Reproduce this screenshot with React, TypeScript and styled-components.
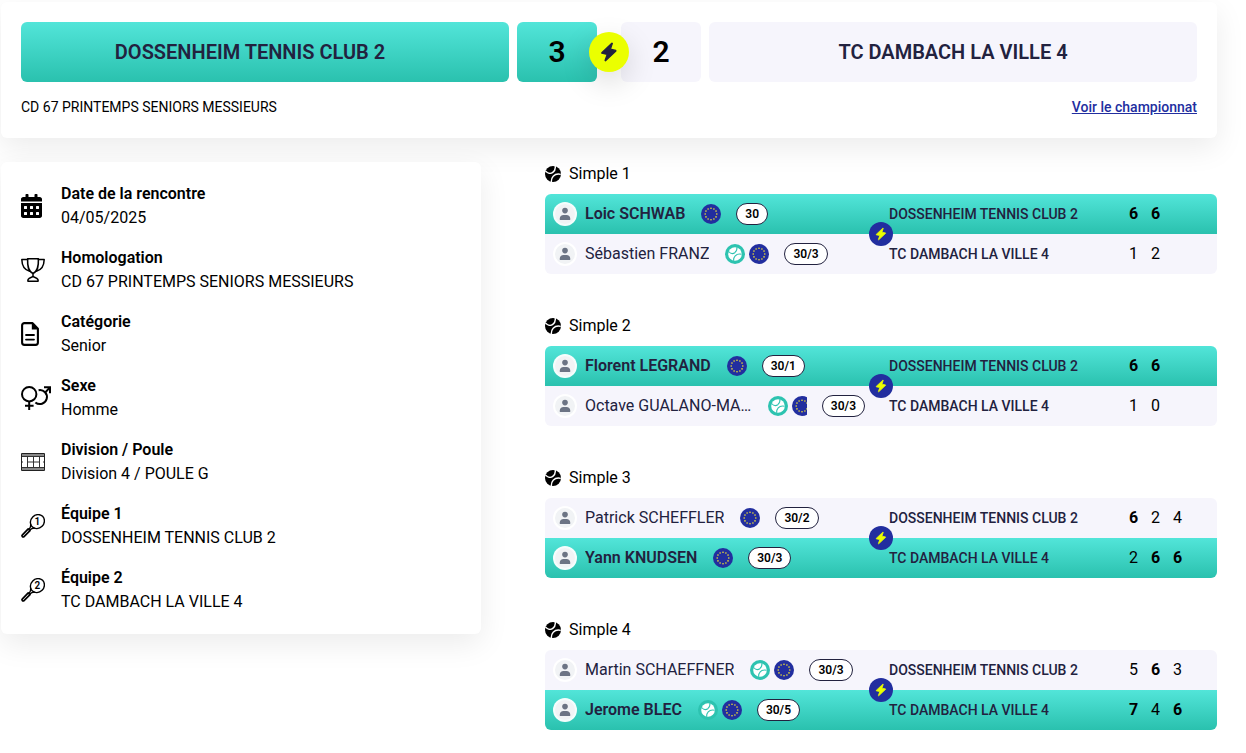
import React from "react";
import styled, { createGlobalStyle, css } from "styled-components";
import { FaCalendarAlt } from "react-icons/fa";

const GlobalStyle = createGlobalStyle`
  *, *::before, *::after { box-sizing: border-box; }
  body {
    margin: 0;
    background: #fff;
    color: #000;
    font-family: Roboto, "Liberation Sans", sans-serif;
    font-size: 16px;
    line-height: 24px;
  }
  h2, h3, p, dl, dt, dd, ul, ol { margin: 0; padding: 0; }
  ul, ol { list-style: none; }
  svg { display: block; }
`;

const teal = "linear-gradient(180deg, #52e5d9 0%, #2ac1ae 100%)";
const pale = "#f6f5fc";
const ink = "#22223f";
const navy = "#222e9f";
const lime = "#ebff00";

const surface = css<{ $win: boolean }>`
  background: ${(p) => (p.$win ? teal : pale)};
`;

const Page = styled.main`
  display: grid;
  gap: 24px;
  padding: 2px 29px 20px 1px;
`;

const Card = styled.section`
  padding: 20px;
  border-radius: 6px;
  background: #fff;
  box-shadow: 0 10px 30px rgba(0, 0, 0, 0.08);
`;

const Scoreboard = styled.div`
  display: grid;
  grid-template-columns: 1fr auto 1fr;
  gap: 8px;
`;

const TeamBanner = styled.h2<{ $win: boolean }>`
  ${surface}
  display: flex;
  align-items: center;
  justify-content: center;
  height: 60px;
  padding-right: ${(p) => (p.$win ? 30 : 0)}px;
  border-radius: 6px;
  color: ${ink};
  font-size: 20px;
  font-weight: 600;
`;

const ScorePair = styled.div`
  position: relative;
  display: flex;
  gap: 24px;
`;

const TeamScore = styled.strong<{ $win: boolean }>`
  ${surface}
  display: flex;
  align-items: center;
  justify-content: center;
  width: 80px;
  height: 60px;
  border-radius: 6px;
  font-size: 30px;
  font-weight: 600;
`;

const Versus = styled.span<{ $size: number; $accent?: boolean }>`
  position: absolute;
  top: 50%;
  left: 50%;
  transform: translate(-50%, -50%);
  display: flex;
  align-items: center;
  justify-content: center;
  width: ${(p) => p.$size}px;
  height: ${(p) => p.$size}px;
  border-radius: 50%;
  background: ${(p) => (p.$accent ? lime : navy)};
  color: ${(p) => (p.$accent ? ink : lime)};
  box-shadow: ${(p) => (p.$accent ? "0 10px 30px rgba(0, 0, 0, 0.15)" : "none")};
`;

const CardFooter = styled.div`
  display: flex;
  justify-content: space-between;
  margin-top: 14px;
  font-size: 14px;
  line-height: 22px;
`;

const ChampionshipLink = styled.a`
  color: ${navy};
  font-weight: 500;
  text-decoration: underline;
`;

const Columns = styled.div`
  display: grid;
  grid-template-columns: 5fr 7fr;
  gap: 64px;
  align-items: start;
`;

const Details = styled.dl`
  display: grid;
  gap: 16px;
`;

const Detail = styled.div`
  display: grid;
  grid-template-columns: 24px 1fr;
  column-gap: 16px;
`;

const DetailIcon = styled.span`
  grid-row: 1 / 3;
  align-self: center;
`;

const Term = styled.dt`
  font-weight: 600;
`;

const Value = styled.dd`
  grid-column: 2;
`;

const Matches = styled.div`
  display: grid;
  gap: 40px;
  min-width: 0;
`;

const MatchTitle = styled.h3`
  display: flex;
  align-items: center;
  gap: 8px;
  margin-bottom: 8px;
  font-size: 16px;
  font-weight: 400;
`;

const MatchBox = styled.ul`
  position: relative;
`;

const PlayerRow = styled.li<{ $win: boolean }>`
  ${surface}
  display: grid;
  grid-template-columns: 7fr 5fr 2fr;
  align-items: center;
  height: 40px;
  color: ${ink};
  &:nth-child(1) { border-radius: 6px 6px 0 0; }
  &:nth-child(2) { border-radius: 0 0 6px 6px; }
`;

const Player = styled.div`
  display: flex;
  align-items: center;
  min-width: 0;
  padding: 0 16px 0 8px;
`;

const Avatar = styled.span`
  flex: none;
  margin-right: 8px;
`;

const Identity = styled.div`
  display: flex;
  align-items: center;
  gap: 16px;
  min-width: 0;
  overflow: hidden;
`;

const Name = styled.span<{ $win: boolean }>`
  flex: none;
  max-width: 167px;
  overflow: hidden;
  text-overflow: ellipsis;
  white-space: nowrap;
  font-weight: ${(p) => (p.$win ? 600 : 400)};
`;

const Badges = styled.span`
  display: flex;
  flex: none;
  gap: 4px;
`;

const Rank = styled.span`
  flex: none;
  margin-left: 15px;
  padding: 0 8px;
  border: 1px solid ${ink};
  border-radius: 11px;
  background: #fff;
  color: #000;
  font-size: 12px;
  font-weight: 600;
  line-height: 20px;
`;

const Club = styled.span`
  padding-left: 8px;
  font-size: 14px;
  font-weight: 500;
  white-space: nowrap;
`;

const Sets = styled.ol`
  display: flex;
  gap: 12px;
  padding-left: 8px;
  color: #000;
`;

const SetScore = styled.li<{ $won: boolean }>`
  width: 10px;
  font-weight: ${(p) => (p.$won ? 700 : 400)};
`;

const Bolt = ({ size }: { size: number }) => (
  <svg width={size} height={size} viewBox="0 0 24 24" aria-hidden="true">
    <path
      d="M14.8 3.2 4.8 12.6 4.8 13.2 10.2 14.4 8 20.4 8.5 20.8 18.9 11 18.8 10.4 13.4 9.2 15.4 3.4Z"
      fill="currentColor"
      stroke="currentColor"
      strokeWidth="1.2"
      strokeLinejoin="round"
    />
  </svg>
);

const BallIcon = () => (
  <svg width="16" height="16" viewBox="0 0 16 16" aria-hidden="true">
    <circle cx="8" cy="8" r="8" fill="#000" />
    <g fill="none" stroke="#fff" strokeWidth="1.4">
      <path d="M0.4 5C2.6 7.4 5.8 8 7.8 6.4C9.8 4.8 10.6 2.4 10.2 0" />
      <path d="M15.8 8.4C12.8 7.6 10 8.4 8.2 10.2C6.8 11.8 6.2 13.8 6.4 16" />
    </g>
  </svg>
);

const BallBadge = () => (
  <svg width="20" height="20" viewBox="0 0 20 20" aria-hidden="true">
    <circle cx="10" cy="10" r="10" fill="#2dc3b0" />
    <circle cx="10" cy="10" r="6.8" fill="#fff" />
    <g fill="none" stroke="#2dc3b0" strokeWidth="1.1">
      <path d="M3.6 7.5C5.4 9.5 8.1 10 9.8 8.7C11.5 7.3 12.2 5.3 11.9 3.2" />
      <path d="M16.6 10.3C14.1 9.7 11.7 10.3 10.2 11.9C9 13.2 8.5 14.9 8.6 16.8" />
    </g>
  </svg>
);

const stars = Array.from({ length: 12 }, (_, i) => {
  const a = (i * Math.PI) / 6;
  return { x: 10 + 5.8 * Math.sin(a), y: 10 - 5.8 * Math.cos(a) };
});

const EuropeBadge = () => (
  <svg width="20" height="20" viewBox="0 0 20 20" aria-hidden="true">
    <circle cx="10" cy="10" r="10" fill={navy} />
    {stars.map((s, i) => (
      <circle key={i} cx={s.x} cy={s.y} r="0.8" fill="#f5e430" />
    ))}
  </svg>
);

const AvatarIcon = () => (
  <svg width="24" height="24" viewBox="0 0 24 24" aria-hidden="true">
    <circle cx="12" cy="12" r="12" fill="#fff" fillOpacity="0.95" />
    <circle cx="12" cy="12" r="10" fill="#f1f3f5" />
    <circle cx="12" cy="8.6" r="2.8" fill="#6c7484" />
    <path d="M6.8 18v-1.6c0-2 1.6-3.4 3.6-3.4h3.2c2 0 3.6 1.4 3.6 3.4V18Z" fill="#6c7484" />
  </svg>
);

const TrophyIcon = () => (
  <svg width="24" height="24" viewBox="0 0 24 24" fill="none" stroke="#000" strokeWidth="1.5" strokeLinejoin="round" strokeLinecap="round" aria-hidden="true">
    <path d="M6.6 0.8H17.4C17.6 8 17 13.4 12 15.4C7 13.4 6.4 8 6.6 0.8Z" />
    <path d="M6.6 1.6H0.8C1 8.4 3 12 8.6 13.2" />
    <path d="M17.4 1.6H23.2C23 8.4 21 12 15.4 13.2" />
    <path d="M12 15.4V18.2C11 19.8 8.4 19.2 7.2 21.4C6.8 22.2 6.8 23.2 7 23.2H17C17.2 23.2 17.2 22.2 16.8 21.4C15.6 19.2 13 19.8 12 18.2" />
  </svg>
);

const DocumentIcon = () => (
  <svg width="18" height="24" viewBox="0 0 18 24" aria-hidden="true">
    <path d="M3.4 1.1H11.6L16.9 6.8V20.6a2.3 2.3 0 0 1-2.3 2.3H3.4a2.3 2.3 0 0 1-2.3-2.3V3.4a2.3 2.3 0 0 1 2.3-2.3Z" fill="none" stroke="#000" strokeWidth="2.1" strokeLinejoin="round" />
    <path d="M10.8 1.2V7.4H16.8L11.8 1.2Z" fill="#000" />
    <path d="M5 13H13M5 17.6H13" stroke="#000" strokeWidth="1.8" strokeLinecap="round" />
  </svg>
);

const GenderIcon = () => (
  <svg width="30" height="24" viewBox="0 0 30 24" fill="none" stroke="#000" strokeWidth="2" aria-hidden="true">
    <circle cx="8.2" cy="8.2" r="7.2" />
    <path d="M8.2 15.4V24M4 19.8H12.6" />
    <path d="M17.6 4.2A7 7 0 1 1 14.4 16.4" />
    <path d="M24.4 6.2L28.8 1.6M23 1.2H29V7.2" />
  </svg>
);

const CourtIcon = () => (
  <svg width="24" height="18" viewBox="0 0 24 18" fill="none" stroke="#222" aria-hidden="true">
    <path d="M0 2H24M0 16H24" stroke="#888" strokeWidth="2" />
    <path d="M0 3.5H24M0 14.5H24M6.5 3.5V14.5M12.5 3.5V14.5M18.5 3.5V14.5M6.5 9H18.5M0.5 9H2M22 9H23.5" stroke="#333" strokeWidth="1" />
    <path d="M0.5 0.5H23.5V17.5H0.5Z" strokeWidth="1" />
  </svg>
);

const RacketIcon = ({ label }: { label: string }) => (
  <svg width="24" height="24" viewBox="0 0 24 24" fill="none" stroke="#000" strokeWidth="1.4" strokeLinejoin="round" aria-hidden="true">
    <ellipse cx="16.4" cy="7.6" rx="7.4" ry="6.6" transform="rotate(-45 16.4 7.6)" />
    <path d="M9.8 10C10 12.6 9.2 14 8 15.2M14 14.2C11.4 14 10 14.8 8.8 16" />
    <path d="M7.2 14.9L9 16.7L2.8 22.8C2 23.6 0.4 22 1.2 21.2Z" strokeWidth="1.7" />
    <text x="16.4" y="11.2" textAnchor="middle" fontFamily="Roboto, sans-serif" fontSize="10" fontWeight="600" fill="#000" stroke="none">
      {label}
    </text>
  </svg>
);

const CalendarIcon = styled(FaCalendarAlt)`
  width: 21px;
  height: 24px;
`;

const home = "DOSSENHEIM TENNIS CLUB 2";
const away = "TC DAMBACH LA VILLE 4";

const details = [
  { term: "Date de la rencontre", value: "04/05/2025", icon: <CalendarIcon /> },
  { term: "Homologation", value: "CD 67 PRINTEMPS SENIORS MESSIEURS", icon: <TrophyIcon /> },
  { term: "Catégorie", value: "Senior", icon: <DocumentIcon /> },
  { term: "Sexe", value: "Homme", icon: <GenderIcon /> },
  { term: "Division / Poule", value: "Division 4 / POULE G", icon: <CourtIcon /> },
  { term: "Équipe 1", value: home, icon: <RacketIcon label="1" /> },
  { term: "Équipe 2", value: away, icon: <RacketIcon label="2" /> },
];

type Side = { name: string; rank: string; licensed?: boolean; sets: number[] };

const matches: { title: string; winner: number; sides: [Side, Side] }[] = [
  {
    title: "Simple 1",
    winner: 0,
    sides: [
      { name: "Loic SCHWAB", rank: "30", sets: [6, 6] },
      { name: "Sébastien FRANZ", rank: "30/3", licensed: true, sets: [1, 2] },
    ],
  },
  {
    title: "Simple 2",
    winner: 0,
    sides: [
      { name: "Florent LEGRAND", rank: "30/1", sets: [6, 6] },
      { name: "Octave GUALANO-MA...", rank: "30/3", licensed: true, sets: [1, 0] },
    ],
  },
  {
    title: "Simple 3",
    winner: 1,
    sides: [
      { name: "Patrick SCHEFFLER", rank: "30/2", sets: [6, 2, 4] },
      { name: "Yann KNUDSEN", rank: "30/3", sets: [2, 6, 6] },
    ],
  },
  {
    title: "Simple 4",
    winner: 1,
    sides: [
      { name: "Martin SCHAEFFNER", rank: "30/3", licensed: true, sets: [5, 6, 3] },
      { name: "Jerome BLEC", rank: "30/5", licensed: true, sets: [7, 4, 6] },
    ],
  },
];

export default function App() {
  return (
    <>
      <GlobalStyle />
      <Page>
        <Card>
          <Scoreboard>
            <TeamBanner $win>{home}</TeamBanner>
            <ScorePair>
              <TeamScore $win>3</TeamScore>
              <TeamScore $win={false}>2</TeamScore>
              <Versus $size={40} $accent>
                <Bolt size={24} />
              </Versus>
            </ScorePair>
            <TeamBanner $win={false}>{away}</TeamBanner>
          </Scoreboard>
          <CardFooter>
            <p>CD 67 PRINTEMPS SENIORS MESSIEURS</p>
            <ChampionshipLink href="#championnat">Voir le championnat</ChampionshipLink>
          </CardFooter>
        </Card>
        <Columns>
          <Card>
            <Details>
              {details.map((d) => (
                <Detail key={d.term}>
                  <DetailIcon>{d.icon}</DetailIcon>
                  <Term>{d.term}</Term>
                  <Value>{d.value}</Value>
                </Detail>
              ))}
            </Details>
          </Card>
          <Matches>
            {matches.map((m) => (
              <section key={m.title}>
                <MatchTitle>
                  <BallIcon />
                  {m.title}
                </MatchTitle>
                <MatchBox>
                  {m.sides.map((side, i) => {
                    const win = i === m.winner;
                    const other = m.sides[1 - i];
                    return (
                      <PlayerRow key={side.name} $win={win}>
                        <Player>
                          <Avatar>
                            <AvatarIcon />
                          </Avatar>
                          <Identity>
                            <Name $win={win}>{side.name}</Name>
                            <Badges>
                              {side.licensed && <BallBadge />}
                              <EuropeBadge />
                            </Badges>
                          </Identity>
                          <Rank>{side.rank}</Rank>
                        </Player>
                        <Club>{i === 0 ? home : away}</Club>
                        <Sets>
                          {side.sets.map((s, n) => (
                            <SetScore key={n} $won={s > other.sets[n]}>
                              {s}
                            </SetScore>
                          ))}
                        </Sets>
                      </PlayerRow>
                    );
                  })}
                  <Versus as="li" $size={24}>
                    <Bolt size={16} />
                  </Versus>
                </MatchBox>
              </section>
            ))}
          </Matches>
        </Columns>
      </Page>
    </>
  );
}
